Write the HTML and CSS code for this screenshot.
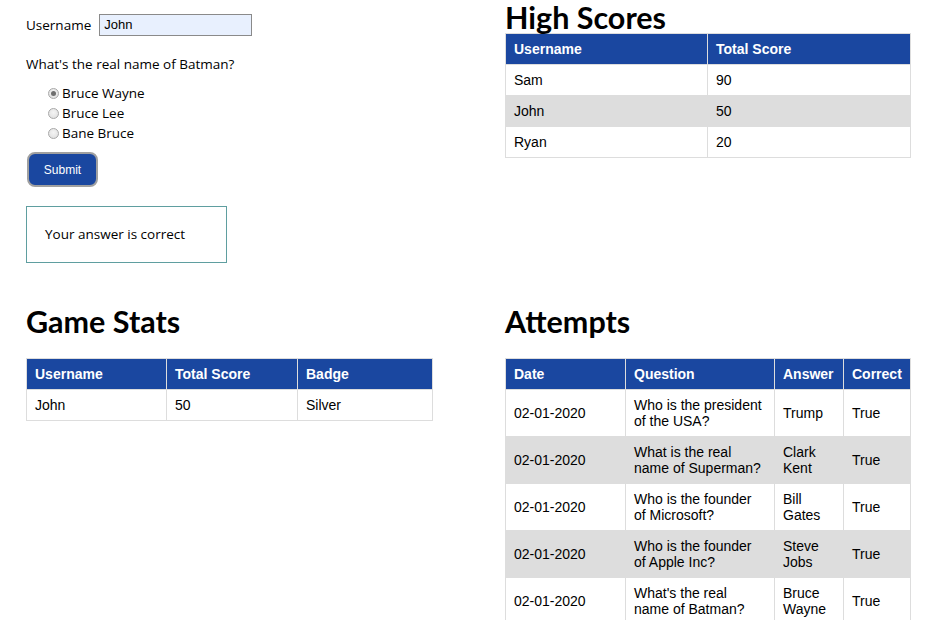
FILE: index.html
```html
<!DOCTYPE html>
<html>
<head>
<meta charset="utf-8">
<link rel="stylesheet" href="styles.css">
</head>
<body>
<div class="page">
  <div class="col">
    <form class="quiz">
      <div class="field">
        <label class="lbl">Username</label>
        <input class="txt" type="text" value="John">
      </div>
      <p class="question">What's the real name of Batman?</p>
      <div class="options">
        <label class="opt"><input type="radio" name="a" checked> Bruce Wayne</label>
        <label class="opt"><input type="radio" name="a"> Bruce Lee</label>
        <label class="opt"><input type="radio" name="a"> Bane Bruce</label>
      </div>
      <button type="button" class="submit">Submit</button>
      <div class="result">Your answer is correct</div>
    </form>
  </div>
  <div class="col">
    <h1 class="title title-top">High Scores</h1>
    <table class="tbl">
      <colgroup><col class="w202"><col class="w203"></colgroup>
      <thead><tr><th>Username</th><th>Total Score</th></tr></thead>
      <tbody>
        <tr><td>Sam</td><td>90</td></tr>
        <tr><td>John</td><td>50</td></tr>
        <tr><td>Ryan</td><td>20</td></tr>
      </tbody>
    </table>
  </div>
  <div class="col">
    <h1 class="title">Game Stats</h1>
    <table class="tbl">
      <colgroup><col class="w140"><col class="w131"><col class="w135"></colgroup>
      <thead><tr><th>Username</th><th>Total Score</th><th>Badge</th></tr></thead>
      <tbody>
        <tr><td>John</td><td>50</td><td>Silver</td></tr>
      </tbody>
    </table>
  </div>
  <div class="col">
    <h1 class="title">Attempts</h1>
    <table class="tbl">
      <colgroup><col class="w120"><col class="w149"><col class="w69"><col class="w67"></colgroup>
      <thead><tr><th>Date</th><th>Question</th><th>Answer</th><th>Correct</th></tr></thead>
      <tbody>
        <tr><td>02-01-2020</td><td class="q">Who is the president of the USA?</td><td>Trump</td><td>True</td></tr>
        <tr><td>02-01-2020</td><td class="q">What is the real name of Superman?</td><td>Clark Kent</td><td>True</td></tr>
        <tr><td>02-01-2020</td><td class="q">Who is the founder of Microsoft?</td><td>Bill Gates</td><td>True</td></tr>
        <tr><td>02-01-2020</td><td class="q">Who is the founder of Apple Inc?</td><td>Steve Jobs</td><td>True</td></tr>
        <tr><td>02-01-2020</td><td class="q">What's the real name of Batman?</td><td>Bruce Wayne</td><td>True</td></tr>
      </tbody>
    </table>
  </div>
</div>
</body>
</html>
```

FILE: styles.css
```css
html, body {
  margin: 0;
  padding: 0;
  background: #fff;
}
body {
  font-family: "Open Sans", "Noto Sans", sans-serif;
  font-size: 13.5px;
  color: #000;
}
.page {
  display: grid;
  grid-template-columns: 406px 406px;
  column-gap: 73px;
  row-gap: 21px;
  padding: 0 18px 0 26px;
}
.quiz {
  padding-top: 14px;
}
.field {
  display: flex;
  align-items: center;
  gap: 8px;
  height: 21px;
}
.lbl {
  line-height: 20px;
}
.txt {
  box-sizing: border-box;
  width: 153px;
  height: 22px;
  margin: 0;
  padding: 1px 4px;
  border: 1px solid #8a8a8a;
  background: #e8f0fe;
  font-family: "Liberation Sans", Arial, sans-serif;
  font-size: 13px;
  color: #000;
}
.question {
  margin: 19px 0 0;
  line-height: 20px;
}
.options {
  margin-top: 9px;
  padding-left: 22px;
  display: flex;
  flex-direction: column;
}
.opt {
  line-height: 20px;
  height: 20px;
  display: flex;
  align-items: center;
}
.opt input {
  appearance: none;
  -webkit-appearance: none;
  box-sizing: border-box;
  margin: 0 3px 0 0;
  width: 11px;
  height: 11px;
  border-radius: 50%;
  border: 1px solid #a8a8a8;
  background: radial-gradient(circle at 50% 40%, #f4f4f4 0, #dcdcdc 100%);
  position: relative;
}
.opt input:checked::after {
  content: "";
  position: absolute;
  left: 2px;
  top: 2px;
  width: 5px;
  height: 5px;
  border-radius: 50%;
  background: #6e6e6e;
}
.submit {
  display: block;
  margin-top: 9px;
  margin-left: 1px;
  width: 71px;
  height: 35px;
  border: 2px solid #a0a0a0;
  border-radius: 8px;
  background: #1a47a0;
  color: #fff;
  font-family: "Liberation Sans", Arial, sans-serif;
  font-size: 12px;
  padding: 0;
}
.result {
  margin-top: 19px;
  width: 201px;
  box-sizing: border-box;
  border: 1px solid #5f9ea0;
  padding: 18px;
  line-height: 19px;
}
.title {
  font-family: Lato, "Open Sans", sans-serif;
  font-size: 30.5px;
  font-weight: 700;
  line-height: 32px;
  margin: 21px 0;
}
.title-top {
  margin: 0 0 1px;
  padding-top: 2px;
  line-height: 30px;
}
.tbl {
  border-collapse: collapse;
  table-layout: fixed;
  width: 406px;
  font-family: "Liberation Sans", Arial, sans-serif;
  font-size: 14px;
}
.tbl th, .tbl td {
  border: 1px solid #ddd;
  padding: 7px 8px;
  text-align: left;
  line-height: 16px;
}
.tbl td.q {
  padding-right: 10px;
}
.tbl th {
  background: #1a47a0;
  color: #fff;
  font-weight: 700;
}
.tbl tbody tr:nth-child(even) td {
  background: #ddd;
}
.w202 { width: 202px; }
.w203 { width: 203px; }
.w140 { width: 140px; }
.w131 { width: 131px; }
.w135 { width: 135px; }
.w120 { width: 120px; }
.w149 { width: 149px; }
.w69 { width: 69px; }
.w67 { width: 67px; }
```
